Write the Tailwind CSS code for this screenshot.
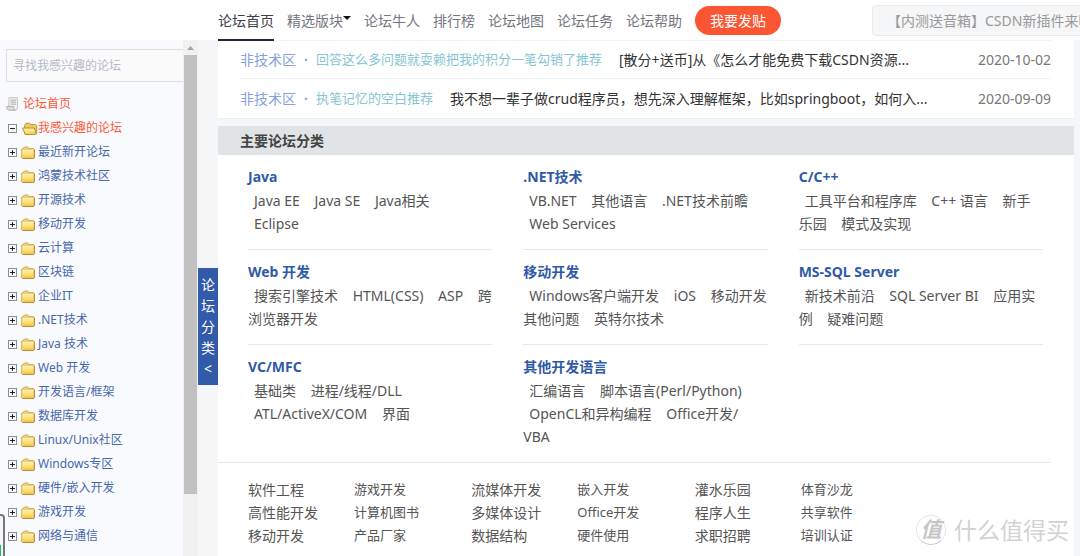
<!DOCTYPE html>
<html lang="zh-CN">
<head>
<meta charset="utf-8">
<meta name="viewport" content="width=device-width, initial-scale=1">
<title>论坛首页</title>
<script src="https://cdn.jsdelivr.net/npm/@tailwindcss/browser@4"></script>
</head>
<body class="h-screen overflow-hidden flex flex-col bg-[#f5f6f8] text-[#555] text-[14px] font-['Noto_Sans','Noto_Sans_CJK_SC',sans-serif]">
<svg class="absolute w-0 h-0" aria-hidden="true">
  <defs>
    <linearGradient id="fold" x1="0" y1="0" x2="0" y2="1"><stop offset="0" stop-color="#fff3b0"/><stop offset=".5" stop-color="#fde277"/><stop offset="1" stop-color="#f4c650"/></linearGradient>
  </defs>
  <symbol id="plus" viewBox="0 0 9 9"><rect x=".5" y=".5" width="8" height="8" fill="#fafafa" stroke="#8e8e8e"/><path d="M2 4.500h5M4.500 2v5" stroke="#222"/></symbol>
  <symbol id="minus" viewBox="0 0 9 9"><rect x=".5" y=".5" width="8" height="8" fill="#fafafa" stroke="#8e8e8e"/><path d="M2 4.500h5" stroke="#222"/></symbol>
  <symbol id="folder" viewBox="0 0 14 13"><path d="M.6 3.200 2 2.500 3.200 1h3.600l1.200 1.500h4.500l1 1v8l-1 1h-11l-.9-.9z" fill="#efcb74" stroke="#c9a050" stroke-width=".8"/><path d="M1.200 4h11.300v7.700H1.200z" fill="url(#fold)"/><path d="M13.300 4v8l-.8.600H1.500" fill="none" stroke="#b0812f" stroke-width=".8"/></symbol>
  <symbol id="open" viewBox="0 0 16 13"><path d="M2.500 11.500v-8L4 1.200h3.600L9 2.500h4.500l1.200 1.200v7.800z" fill="#ecca62" stroke="#a98736" stroke-width=".8"/><path d="M.6 6h11.800l1.900 5.800-.8.700H3.200z" fill="url(#fold)" stroke="#a98a2e" stroke-width=".9"/></symbol>
  <symbol id="page" viewBox="0 0 13 14"><path d="M3 .6h8.500v10.500l-1 2H4c-1.200 0-1.500-.8-1.500-2z" fill="#eee" stroke="#c4c4c4" stroke-width=".9"/><path d="M.6 9.500h7v2.200c0 1 .8 1.500 1.700 1.500H3C1.500 13.200.6 12 .6 9.500z" fill="#ddd" stroke="#aaa" stroke-width=".8"/><path d="M4.500 3.200h5.500M4.500 5.200h5.500M4.500 7.200h5.500" stroke="#aaa" stroke-width=".9"/></symbol>
</svg>

<header class="relative z-10 h-10 shrink-0 flex items-center bg-white overflow-x-clip">
  <nav class="ml-[218px] flex items-center gap-[13px] h-full text-[#74757f] whitespace-nowrap">
    <a href="#" class="relative h-full flex items-center text-[#3d3d4d]">论坛首页<span class="absolute inset-x-0 -bottom-px h-0.5 bg-[#22223a]"></span></a>
    <a href="#" class="flex items-center">精选版块<svg class="w-2 h-1 mb-1" viewBox="0 0 8 4"><path d="M0 0h8L4 4z" fill="#111"/></svg></a>
    <a href="#">论坛牛人</a>
    <a href="#">排行榜</a>
    <a href="#">论坛地图</a>
    <a href="#">论坛任务</a>
    <a href="#">论坛帮助</a>
    <button type="button" class="h-[29px] w-[86px] rounded-full bg-[#fc5531] text-white">我要发贴</button>
  </nav>
  <form class="ml-auto -mr-3 shrink-0 w-[220px]">
    <input type="text" aria-label="搜索" placeholder="【内测送音箱】CSDN新插件来啦" class="block w-full h-[31px] pl-[14px] rounded border border-[#e9eaec] bg-[#f5f6f7] placeholder:text-[#999]">
  </form>
</header>

<div class="flex-1 min-h-0 flex">
  <aside class="relative w-[198px] shrink-0 flex bg-[#f9fafe] overflow-hidden text-[12px] text-[#4767ab]">
    <div class="flex-1 min-w-0 overflow-hidden whitespace-nowrap">
      <div class="pl-[6px] pt-[9px]">
        <input type="text" aria-label="寻找论坛" placeholder="寻找我感兴趣的论坛" class="block w-[200px] h-[33px] pl-[6px] border border-[#dcdee2] bg-[#fafafa] placeholder:text-[#b4bbc7]">
      </div>
      <a href="#" class="mt-[10px] pl-[6px] flex items-center gap-[4px] h-6 text-[#fc5b3c]"><svg class="w-[13px] h-[14px]"><use href="#page"/></svg>论坛首页</a>
      <ul class="[&>li]:flex [&>li]:items-center [&>li]:gap-[4px] [&>li]:h-6 [&>li]:pl-2">
        <li class="text-[#fc5b3c]"><svg class="w-[9px] h-[9px]"><use href="#minus"/></svg><a href="#" class="flex items-center pl-px"><svg class="w-4 h-[13px]"><use href="#open"/></svg>我感兴趣的论坛</a></li>
        <li><svg class="w-[9px] h-[9px]"><use href="#plus"/></svg><a href="#" class="flex items-center gap-[3px]"><svg class="w-[14px] h-[13px]"><use href="#folder"/></svg>最近新开论坛</a></li>
        <li><svg class="w-[9px] h-[9px]"><use href="#plus"/></svg><a href="#" class="flex items-center gap-[3px]"><svg class="w-[14px] h-[13px]"><use href="#folder"/></svg>鸿蒙技术社区</a></li>
        <li><svg class="w-[9px] h-[9px]"><use href="#plus"/></svg><a href="#" class="flex items-center gap-[3px]"><svg class="w-[14px] h-[13px]"><use href="#folder"/></svg>开源技术</a></li>
        <li><svg class="w-[9px] h-[9px]"><use href="#plus"/></svg><a href="#" class="flex items-center gap-[3px]"><svg class="w-[14px] h-[13px]"><use href="#folder"/></svg>移动开发</a></li>
        <li><svg class="w-[9px] h-[9px]"><use href="#plus"/></svg><a href="#" class="flex items-center gap-[3px]"><svg class="w-[14px] h-[13px]"><use href="#folder"/></svg>云计算</a></li>
        <li><svg class="w-[9px] h-[9px]"><use href="#plus"/></svg><a href="#" class="flex items-center gap-[3px]"><svg class="w-[14px] h-[13px]"><use href="#folder"/></svg>区块链</a></li>
        <li><svg class="w-[9px] h-[9px]"><use href="#plus"/></svg><a href="#" class="flex items-center gap-[3px]"><svg class="w-[14px] h-[13px]"><use href="#folder"/></svg>企业IT</a></li>
        <li><svg class="w-[9px] h-[9px]"><use href="#plus"/></svg><a href="#" class="flex items-center gap-[3px]"><svg class="w-[14px] h-[13px]"><use href="#folder"/></svg>.NET技术</a></li>
        <li><svg class="w-[9px] h-[9px]"><use href="#plus"/></svg><a href="#" class="flex items-center gap-[3px]"><svg class="w-[14px] h-[13px]"><use href="#folder"/></svg>Java 技术</a></li>
        <li><svg class="w-[9px] h-[9px]"><use href="#plus"/></svg><a href="#" class="flex items-center gap-[3px]"><svg class="w-[14px] h-[13px]"><use href="#folder"/></svg>Web 开发</a></li>
        <li><svg class="w-[9px] h-[9px]"><use href="#plus"/></svg><a href="#" class="flex items-center gap-[3px]"><svg class="w-[14px] h-[13px]"><use href="#folder"/></svg>开发语言/框架</a></li>
        <li><svg class="w-[9px] h-[9px]"><use href="#plus"/></svg><a href="#" class="flex items-center gap-[3px]"><svg class="w-[14px] h-[13px]"><use href="#folder"/></svg>数据库开发</a></li>
        <li><svg class="w-[9px] h-[9px]"><use href="#plus"/></svg><a href="#" class="flex items-center gap-[3px]"><svg class="w-[14px] h-[13px]"><use href="#folder"/></svg>Linux/Unix社区</a></li>
        <li><svg class="w-[9px] h-[9px]"><use href="#plus"/></svg><a href="#" class="flex items-center gap-[3px]"><svg class="w-[14px] h-[13px]"><use href="#folder"/></svg>Windows专区</a></li>
        <li><svg class="w-[9px] h-[9px]"><use href="#plus"/></svg><a href="#" class="flex items-center gap-[3px]"><svg class="w-[14px] h-[13px]"><use href="#folder"/></svg>硬件/嵌入开发</a></li>
        <li><svg class="w-[9px] h-[9px]"><use href="#plus"/></svg><a href="#" class="flex items-center gap-[3px]"><svg class="w-[14px] h-[13px]"><use href="#folder"/></svg>游戏开发</a></li>
        <li><svg class="w-[9px] h-[9px]"><use href="#plus"/></svg><a href="#" class="flex items-center gap-[3px]"><svg class="w-[14px] h-[13px]"><use href="#folder"/></svg>网络与通信</a></li>
      </ul>
    </div>
    <div class="w-[15px] flex flex-col items-center bg-[#f1f1f1]" aria-hidden="true">
      <svg class="w-[15px] h-[15px] shrink-0" viewBox="0 0 15 15"><path d="M4 10h7L7.500 6z" fill="#a3a3a3"/></svg>
      <div class="w-[13px] h-[85%] bg-[#c1c1c1]"></div>
    </div>
    <div class="absolute -left-2 -bottom-2 w-[13px] h-[50px] rounded border-2 border-[#777] bg-[#f4f5f7] flex flex-col justify-end" aria-hidden="true"><span class="mr-[2px] h-[17px] bg-[#1fb866]"></span></div>
  </aside>

  <div class="w-5 shrink-0 pt-[228px]">
    <button type="button" class="block w-5 py-[6px] bg-[#315aa8] text-white leading-[21px]">论<br>坛<br>分<br>类<br>&lt;</button>
  </div>

  <main class="flex-1 min-w-0 mr-[6px] flex flex-col">
    <ul class="bg-white border-b border-[#eeeff0] pl-[22px] pr-[23px] text-[#333] whitespace-nowrap [&>li]:flex [&>li]:items-center [&>li]:h-[39px]">
      <li class="border-y border-[#f2f3f5]">
        <a href="#" class="text-[#86a2dc] w-[56px]">非技术区</a><span class="w-[20px] text-center font-bold text-[#86a2dc]">·</span><a href="#" class="text-[13px] text-[#86c5d3]">回答这么多问题就耍赖把我的积分一笔勾销了推荐</a><a href="#" class="ml-[17px]">[散分+送币]从《怎么才能免费下载CSDN资源...</a><time class="ml-auto text-[#777]">2020-10-02</time>
      </li>
      <li>
        <a href="#" class="text-[#86a2dc] w-[56px]">非技术区</a><span class="w-[20px] text-center font-bold text-[#86a2dc]">·</span><a href="#" class="text-[13px] text-[#86c5d3]">执笔记忆的空白推荐</a><a href="#" class="ml-[17px]">我不想一辈子做crud程序员，想先深入理解框架，比如springboot，如何入...</a><time class="ml-auto text-[#777]">2020-09-09</time>
      </li>
    </ul>

    <h2 class="mt-[7px] h-[29px] shrink-0 flex items-center pl-[22px] bg-[#e1e4e7] font-bold text-[#444]">主要论坛分类</h2>

    <div class="relative flex-1 bg-white">
      <div class="mr-[23px] pl-[30px] pr-[8px] border-b border-[#e8e8e8] grid grid-cols-3 gap-x-[31px] leading-[23px] whitespace-nowrap [&_h3]:font-bold [&_h3]:leading-6 [&_h3]:text-[#315aa6] [&_p>a]:ml-[6px] [&_p>a]:mr-[5px] [&>section]:pt-[10px] [&>section]:pb-[14px] [&>section]:border-b [&>section]:border-[#e8e8e8] [&>section:nth-child(n+7)]:border-b-0">
        <section><h3><a href="#">Java</a></h3><p><a href="#">Java EE</a> <a href="#">Java SE</a> <a href="#">Java相关</a><br><a href="#">Eclipse</a></p></section>
        <section><h3><a href="#">.NET技术</a></h3><p><a href="#">VB.NET</a> <a href="#">其他语言</a> <a href="#">.NET技术前瞻</a><br><a href="#">Web Services</a></p></section>
        <section><h3><a href="#">C/C++</a></h3><p><a href="#">工具平台和程序库</a> <a href="#">C++ 语言</a> <a href="#">新手<br>乐园</a> <a href="#">模式及实现</a></p></section>
        <section><h3><a href="#">Web 开发</a></h3><p><a href="#">搜索引擎技术</a> <a href="#">HTML(CSS)</a> <a href="#">ASP</a> <a href="#">跨<br>浏览器开发</a></p></section>
        <section><h3><a href="#">移动开发</a></h3><p><a href="#">Windows客户端开发</a> <a href="#">iOS</a> <a href="#">移动开发<br>其他问题</a> <a href="#">英特尔技术</a></p></section>
        <section><h3><a href="#">MS-SQL Server</a></h3><p><a href="#">新技术前沿</a> <a href="#">SQL Server BI</a> <a href="#">应用实<br>例</a> <a href="#">疑难问题</a></p></section>
        <section><h3><a href="#">VC/MFC</a></h3><p><a href="#">基础类</a> <a href="#">进程/线程/DLL</a><br><a href="#">ATL/ActiveX/COM</a> <a href="#">界面</a></p></section>
        <section><h3><a href="#">其他开发语言</a></h3><p><a href="#">汇编语言</a> <a href="#">脚本语言(Perl/Python)</a><br><a href="#">OpenCL和异构编程</a> <a href="#">Office开发/<br>VBA</a></p></section>
      </div>

      <div class="pt-[15px] pl-[30px] max-w-[700px] grid grid-cols-3 leading-[23px] [&>ul]:grid [&>ul]:grid-cols-[106px_1fr] [&_li:nth-child(even)]:text-[13px]">
        <ul>
          <li><a href="#">软件工程</a></li><li><a href="#">游戏开发</a></li>
          <li><a href="#">高性能开发</a></li><li><a href="#">计算机图书</a></li>
          <li><a href="#">移动开发</a></li><li><a href="#">产品厂家</a></li>
        </ul>
        <ul>
          <li><a href="#">流媒体开发</a></li><li><a href="#">嵌入开发</a></li>
          <li><a href="#">多媒体设计</a></li><li><a href="#">Office开发</a></li>
          <li><a href="#">数据结构</a></li><li><a href="#">硬件使用</a></li>
        </ul>
        <ul>
          <li><a href="#">灌水乐园</a></li><li><a href="#">体育沙龙</a></li>
          <li><a href="#">程序人生</a></li><li><a href="#">共享软件</a></li>
          <li><a href="#">求职招聘</a></li><li><a href="#">培训认证</a></li>
        </ul>
      </div>

      <div class="absolute right-[5px] bottom-[11px] flex items-center gap-2 text-[#d2d2d2] text-[23px] leading-[30px] whitespace-nowrap">
        <span class="w-[30px] h-[30px] rounded-full border border-[#e6e6e6] border-b-[#c4c4c4] text-[21px] leading-[27px] italic font-bold text-[#c6c6c6] text-center">值</span>什么值得买
      </div>
    </div>
  </main>
</div>
</body>
</html>
